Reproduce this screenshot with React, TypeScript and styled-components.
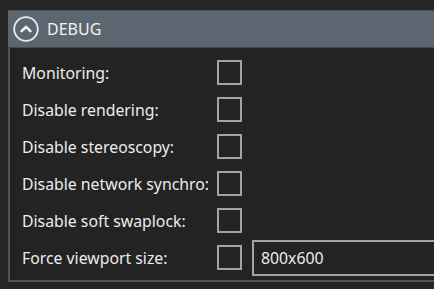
import React from 'react'
import styled, { createGlobalStyle } from 'styled-components'

const rows = [
  { label: 'Monitoring:' },
  { label: 'Disable rendering:' },
  { label: 'Disable stereoscopy:' },
  { label: 'Disable network synchro:' },
  { label: 'Disable soft swaplock:' },
  { label: 'Force viewport size:', value: '800x600' },
]

const App: React.FC = () => {
  return (
    <>
      <GlobalStyle />
      <Panel>
        <Header>
          <CollapseIcon viewBox="0 0 26 26">
            <circle cx="13" cy="13" r="11.8" fill="none" stroke="#e9ecef" strokeWidth="1.8" />
            <path d="M8.6 15.2 L13 10.8 L17.4 15.2" fill="none" stroke="#f4f5f6" strokeWidth="2.6" strokeLinecap="round" strokeLinejoin="round" />
          </CollapseIcon>
          <Title>DEBUG</Title>
        </Header>
        <Body>
          {rows.map((row) => (
            <Row key={row.label}>
              <Label>{row.label}</Label>
              <CheckBox />
              {row.value && <TextField>{row.value}</TextField>}
            </Row>
          ))}
        </Body>
      </Panel>
    </>
  )
}

export default App

const GlobalStyle = createGlobalStyle`
  html, body {
    margin: 0;
    padding: 0;
    background: #252525;
    overflow: hidden;
  }
  body {
    font-family: "Noto Sans", "Open Sans", sans-serif;
    color: #ececec;
  }
`

const Panel = styled.div`
  margin: 10px 0 0 8px;
  width: calc(100vw - 8px);
  box-sizing: border-box;
  border-left: 2px solid #4e5357;
  border-bottom: 2px solid #4e5357;
  background: #232323;
`

const Header = styled.div`
  display: flex;
  align-items: center;
  gap: 8px;
  height: 36px;
  padding-left: 3px;
  background: #5c6670;
  border-top: 1px solid #4a525a;
  border-bottom: 1px solid #434a50;
  margin-left: -2px;
`

const CollapseIcon = styled.svg`
  width: 26px;
  height: 26px;
  margin-left: 2px;
`

const Title = styled.span`
  font-size: 16px;
  color: #f2f2f2;
`

const Body = styled.div`
  display: flex;
  flex-direction: column;
  padding: 6px 0 4px 12px;
`

const Row = styled.div`
  display: flex;
  align-items: center;
  height: 37px;
`

const Label = styled.span`
  width: 195px;
  flex-shrink: 0;
  font-size: 15.8px;
  color: #ececec;
  white-space: nowrap;
`

const CheckBox = styled.div`
  flex-shrink: 0;
  width: 21px;
  height: 21px;
  border: 2px solid #a3a3a3;
`

const TextField = styled.div`
  display: flex;
  align-items: center;
  margin-left: 10px;
  flex: 1;
  height: 32px;
  padding-left: 7px;
  border: 2px solid #a3a3a3;
  border-right: none;
  font-size: 15.8px;
  color: #ececec;
`
